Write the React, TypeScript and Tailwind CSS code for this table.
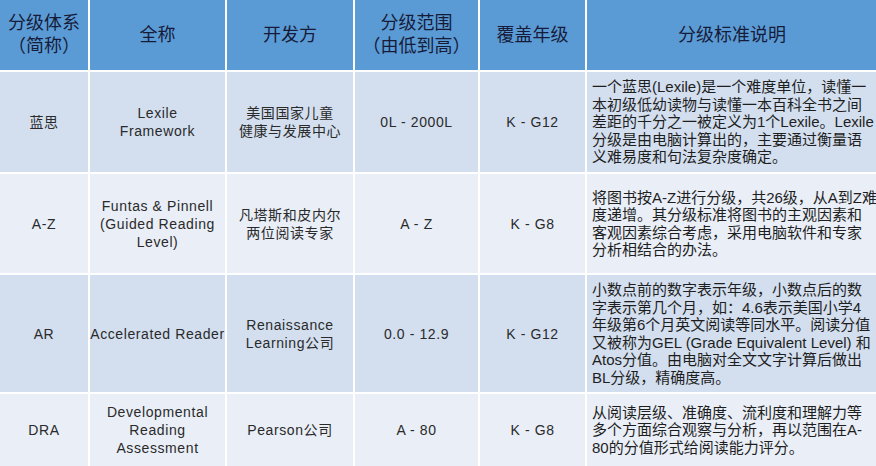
import React from "react";

const font = { fontFamily: '"Liberation Sans", "Noto Sans CJK SC", sans-serif' };

type Row = {
  name: string[];
  full: string[];
  dev: string[];
  range: string;
  grade: string;
  desc: string[];
  bg: string;
};

const rows: Row[] = [
  {
    name: ["蓝思"],
    full: ["Lexile", "Framework"],
    dev: ["美国国家儿童", "健康与发展中心"],
    range: "0L - 2000L",
    grade: "K - G12",
    desc: [
      "一个蓝思(Lexile)是一个难度单位，读懂一",
      "本初级低幼读物与读懂一本百科全书之间",
      "差距的千分之一被定义为1个Lexile。Lexile",
      "分级是由电脑计算出的，主要通过衡量语",
      "义难易度和句法复杂度确定。",
    ],
    bg: "bg-[#d3dfef]",
  },
  {
    name: ["A-Z"],
    full: ["Funtas & Pinnell", "(Guided Reading", "Level)"],
    dev: ["凡塔斯和皮内尔", "两位阅读专家"],
    range: "A - Z",
    grade: "K - G8",
    desc: [
      "将图书按A-Z进行分级，共26级，从A到Z难",
      "度递增。其分级标准将图书的主观因素和",
      "客观因素综合考虑，采用电脑软件和专家",
      "分析相结合的办法。",
    ],
    bg: "bg-[#e9eef7]",
  },
  {
    name: ["AR"],
    full: ["Accelerated Reader"],
    dev: ["Renaissance", "Learning公司"],
    range: "0.0 - 12.9",
    grade: "K - G12",
    desc: [
      "小数点前的数字表示年级，小数点后的数",
      "字表示第几个月，如：4.6表示美国小学4",
      "年级第6个月英文阅读等同水平。阅读分值",
      "又被称为GEL (Grade Equivalent Level) 和",
      "Atos分值。由电脑对全文文字计算后做出",
      "BL分级，精确度高。",
    ],
    bg: "bg-[#d3dfef]",
  },
  {
    name: ["DRA"],
    full: ["Developmental", "Reading", "Assessment"],
    dev: ["Pearson公司"],
    range: "A - 80",
    grade: "K - G8",
    desc: [
      "从阅读层级、准确度、流利度和理解力等",
      "多个方面综合观察与分析，再以范围在A-",
      "80的分值形式给阅读能力评分。",
    ],
    bg: "bg-[#e9eef7]",
  },
];

function Lines({ lines }: { lines: string[] }) {
  return (
    <>
      {lines.map((l, i) => (
        <div key={i} className="whitespace-nowrap">
          {l}
        </div>
      ))}
    </>
  );
}

function Head({ lines }: { lines: string[] }) {
  return (
    <div className="bg-[#5b9bd5] flex flex-col items-center justify-center text-center text-[18px] leading-[23px] text-[#161b3a]">
      <Lines lines={lines} />
    </div>
  );
}

function Cell({ lines, bg }: { lines: string[]; bg: string }) {
  return (
    <div
      className={`${bg} flex flex-col items-center justify-center text-center text-[14px] leading-[18px] text-[#2a2a2a] tracking-[0.6px]`}
    >
      <Lines lines={lines} />
    </div>
  );
}

export default function App() {
  return (
    <div
      style={font}
      className="w-[876px] h-[466px] bg-white grid grid-cols-[88px_135px_126px_123px_105px_1fr] grid-rows-[70px_100px_99px_117px_72px] gap-[2px] overflow-hidden"
    >
      <Head lines={["分级体系", "（简称）"]} />
      <Head lines={["全称"]} />
      <Head lines={["开发方"]} />
      <Head lines={["分级范围", "（由低到高）"]} />
      <Head lines={["覆盖年级"]} />
      <Head lines={["分级标准说明"]} />
      {rows.map((r, i) => (
        <React.Fragment key={i}>
          <Cell lines={r.name} bg={r.bg} />
          <Cell lines={r.full} bg={r.bg} />
          <Cell lines={r.dev} bg={r.bg} />
          <Cell lines={[r.range]} bg={r.bg} />
          <Cell lines={[r.grade]} bg={r.bg} />
          <div
            className={`${r.bg} flex flex-col justify-center pl-[5px] text-[15px] leading-[17.5px] text-[#1e1e1e]`}
          >
            <Lines lines={r.desc} />
          </div>
        </React.Fragment>
      ))}
    </div>
  );
}
